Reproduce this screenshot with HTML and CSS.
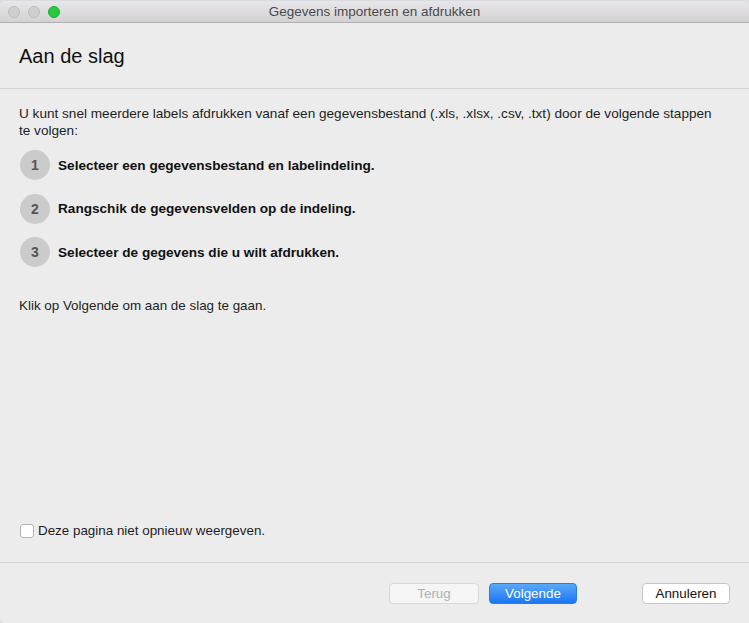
FILE: index.html
```html
<!DOCTYPE html>
<html lang="nl">
<head>
    <meta charset="UTF-8">
    <title>Gegevens importeren en afdrukken</title>
    <link rel="stylesheet" href="styles.css">
</head>
<body>
    <div class="window">
        <div class="titlebar">
            <div class="lights">
                <span class="light"></span>
                <span class="light"></span>
                <span class="light green"></span>
            </div>
            <div class="window-title">Gegevens importeren en afdrukken</div>
        </div>

        <div class="header">
            <h1>Aan de slag</h1>
        </div>

        <div class="content">
            <p class="intro">U kunt snel meerdere labels afdrukken vanaf een gegevensbestand (.xls, .xlsx, .csv, .txt) door de volgende stappen te volgen:</p>

            <ol class="steps">
                <li><span class="num">1</span>Selecteer een gegevensbestand en labelindeling.</li>
                <li><span class="num">2</span>Rangschik de gegevensvelden op de indeling.</li>
                <li><span class="num">3</span>Selecteer de gegevens die u wilt afdrukken.</li>
            </ol>

            <p class="hint">Klik op Volgende om aan de slag te gaan.</p>

            <label class="check">
                <span class="box"></span>
                Deze pagina niet opnieuw weergeven.
            </label>
        </div>

        <div class="footer">
            <button class="btn disabled">Terug</button>
            <button class="btn primary">Volgende</button>
            <button class="btn cancel">Annuleren</button>
        </div>
    </div>
</body>
</html>
```

FILE: styles.css
```css
* {
    box-sizing: border-box;
}

body, html {
    height: 100%;
    margin: 0;
}

body {
    background: #d9dde2;
    font-family: "Liberation Sans", Arial, sans-serif;
    font-size: 13.4px;
    color: #1e1e1e;
}

.window {
    margin-top: 1px;
    height: 622px;
    background: #ececec;
    border-radius: 5px 5px 0 5px;
    display: flex;
    flex-direction: column;
    overflow: hidden;
}

.titlebar {
    height: 22px;
    flex-shrink: 0;
    border-bottom: 1px solid #b1b0b1;
    background: linear-gradient(#e8e6e8, #d3d1d3);
    display: flex;
    align-items: center;
    position: relative;
}

.lights {
    display: flex;
    gap: 8px;
    padding-left: 8px;
}

.light {
    width: 12px;
    height: 12px;
    border-radius: 50%;
    background: #d0cfd0;
    border: 0.5px solid #bdbcbd;
}

.light.green {
    background: #27c93f;
    border-color: #1eaa30;
}

.window-title {
    position: absolute;
    left: 0;
    right: 0;
    text-align: center;
    color: #4a4a4a;
    font-size: 13.5px;
}

.header {
    height: 66px;
    flex-shrink: 0;
    border-bottom: 1px solid #d3d3d3;
    display: flex;
    align-items: center;
    padding-left: 19px;
}

h1 {
    margin: 0;
    font-size: 20px;
    font-weight: normal;
    color: #111;
    padding-top: 2px;
}

.content {
    flex: 1;
    display: flex;
    flex-direction: column;
    padding: 16px 19px 23px 19px;
}

.intro {
    margin: 0;
    font-size: 13.6px;
    line-height: 17px;
    padding-right: 12px;
}

.steps {
    list-style: none;
    margin: 11px 0 0 0;
    padding: 0;
    display: flex;
    flex-direction: column;
    gap: 13.5px;
}

.steps li {
    display: flex;
    align-items: center;
    font-weight: bold;
    font-size: 13.6px;
    height: 30px;
    color: #111;
}

.num {
    width: 30px;
    height: 30px;
    flex-shrink: 0;
    border-radius: 50%;
    background: #cbcbcb;
    color: #555;
    font-size: 14px;
    display: flex;
    align-items: center;
    justify-content: center;
    margin-left: 1px;
    margin-right: 8px;
}

.hint {
    margin: 30px 0 0 0;
    line-height: 17px;
}

.check {
    margin-top: auto;
    display: flex;
    align-items: center;
    line-height: 17px;
}

.box {
    width: 14px;
    height: 14px;
    background: #fff;
    border: 1px solid #b3b3b3;
    border-radius: 3px;
    margin-left: 1px;
    margin-right: 4px;
}

.footer {
    height: 61px;
    flex-shrink: 0;
    border-top: 1px solid #d3d3d3;
    display: flex;
    align-items: flex-start;
    padding: 20px 19px 0 389px;
}

.btn {
    height: 21px;
    width: 88px;
    font-family: "Liberation Sans", Arial, sans-serif;
    font-size: 13.4px;
    border-radius: 4px;
    border: 1px solid #c5c5c5;
    background: #fff;
    color: #111;
    padding: 0;
}

.btn.disabled {
    width: 90px;
    background: #f5f5f5;
    border-color: #d8d8d8;
    color: #b0b0b0;
}

.btn.primary {
    margin-left: 10px;
    background: linear-gradient(#5aa8fa, #1c76f1);
    border-color: #2a7be8;
    color: #fff;
}

.btn.cancel {
    margin-left: auto;
}
```
